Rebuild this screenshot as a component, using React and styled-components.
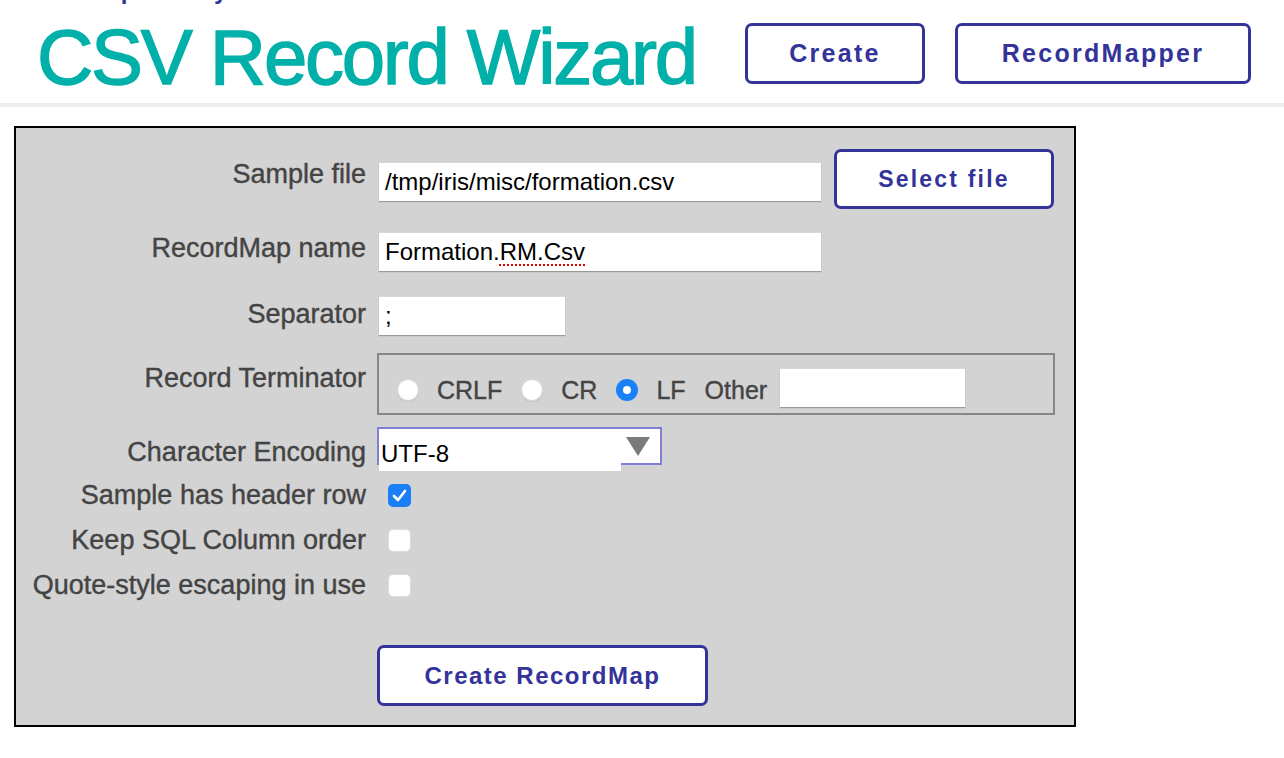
import React from "react";
import styled, { createGlobalStyle } from "styled-components";

const GlobalStyle = createGlobalStyle`
  body {
    margin: 0;
    background: #fff;
    font-family: "Liberation Sans", Arial, sans-serif;
  }
`;

const App = () => {
  return (
    <>
      <GlobalStyle />
      <TopClip>
        <TopText>Interoperability</TopText>
      </TopClip>
      <HeaderBar>
        <Title>CSV Record Wizard</Title>
        <Nav>
          <OutlineButton $w={180} $h={61} $size={25} $ls={2.3}>
            Create
          </OutlineButton>
          <OutlineButton $w={296} $h={61} $size={25} $ls={2.3}>
            RecordMapper
          </OutlineButton>
        </Nav>
      </HeaderBar>
      <Main>
        <Panel>
          <Row $mt={21}>
            <Label $mt={10}>Sample file</Label>
            <FieldGroup>
              <TextField $w={442} $mt={13}>
                /tmp/iris/misc/formation.csv
              </TextField>
              <OutlineButton $w={220} $h={60} $size={23} $ls={2.2}>
                Select file
              </OutlineButton>
            </FieldGroup>
          </Row>

          <Row $mt={23}>
            <Label $mt={1}>RecordMap name</Label>
            <TextField $w={442}>
              Formation.<Misspelled>RM.Csv</Misspelled>
            </TextField>
          </Row>

          <Row $mt={25}>
            <Label $mt={3}>Separator</Label>
            <TextField $w={186}>;</TextField>
          </Row>

          <Row $mt={18}>
            <Label $mt={10}>Record Terminator</Label>
            <Fieldset>
              <Radio />
              <OptionText>CRLF</OptionText>
              <Radio />
              <OptionText>CR</OptionText>
              <Radio $checked />
              <OptionText>LF</OptionText>
              <OptionText $gap={13}>Other</OptionText>
              <TextField $w={185} $mt={-5} $ml={0} />
            </Fieldset>
          </Row>

          <Row $mt={12}>
            <Label $mt={10}>Character Encoding</Label>
            <Select>
              <SelectValue>UTF-8</SelectValue>
              <SelectArrow />
            </Select>
          </Row>

          <Row $mt={12} $center>
            <Label>Sample has header row</Label>
            <Checkbox $checked>
              <svg width="15" height="13" viewBox="0 0 15 13">
                <polyline
                  points="2,7 6,11 13,2"
                  fill="none"
                  stroke="#fff"
                  strokeWidth="2.6"
                  strokeLinecap="round"
                  strokeLinejoin="round"
                />
              </svg>
            </Checkbox>
          </Row>

          <Row $mt={14} $center>
            <Label>Keep SQL Column order</Label>
            <Checkbox />
          </Row>

          <Row $mt={14} $center>
            <Label>Quote-style escaping in use</Label>
            <Checkbox />
          </Row>

          <Row $mt={44}>
            <Label />
            <OutlineButton $w={331} $h={61} $size={24} $ls={1.5}>
              Create RecordMap
            </OutlineButton>
          </Row>
        </Panel>
      </Main>
    </>
  );
};

export default App;

const TopClip = styled.div`
  height: 4px;
  overflow: hidden;
  display: flex;
  align-items: flex-end;
  padding-left: 54px;
`;
const TopText = styled.div`
  flex: 0 0 auto;
  font-size: 24px;
  line-height: 27px;
  font-weight: bold;
  color: #333399;
`;
const HeaderBar = styled.header`
  height: 99px;
  display: flex;
  justify-content: space-between;
  align-items: flex-start;
  padding: 0 33px 0 37px;
  border-bottom: 4px solid #eeeeee;
`;
const Title = styled.h1`
  margin: 14px 0 0;
  font-size: 78px;
  line-height: 78px;
  font-weight: normal;
  letter-spacing: -2.3px;
  color: #00b0a9;
  -webkit-text-stroke: 1.4px #00b0a9;
`;
const Nav = styled.nav`
  display: flex;
  gap: 30px;
  margin-top: 19px;
`;
const OutlineButton = styled.button`
  box-sizing: border-box;
  width: ${(p) => p.$w}px;
  height: ${(p) => p.$h}px;
  flex: 0 0 auto;
  border: 3px solid #333399;
  border-radius: 7px;
  background: #fff;
  color: #333399;
  font-family: "Liberation Sans", Arial, sans-serif;
  font-weight: bold;
  font-size: ${(p) => p.$size}px;
  letter-spacing: ${(p) => p.$ls}px;
  padding: 0;
  cursor: pointer;
`;
const Main = styled.main`
  padding: 19px 0 0 14px;
`;
const Panel = styled.section`
  box-sizing: border-box;
  width: 1062px;
  border: 2px solid #000;
  background: #d3d3d3;
  padding-bottom: 19px;
`;
const Row = styled.div`
  display: flex;
  align-items: ${(p) => (p.$center ? "center" : "flex-start")};
  gap: 11px;
  margin-top: ${(p) => p.$mt}px;
`;
const Label = styled.div`
  flex: 0 0 350px;
  text-align: right;
  font-size: 27px;
  line-height: 31px;
  color: #444;
  -webkit-text-stroke: 0.4px #444;
  margin-top: ${(p) => p.$mt || 0}px;
  white-space: nowrap;
`;
const FieldGroup = styled.div`
  display: flex;
  align-items: flex-start;
  gap: 13px;
`;
const TextField = styled.div`
  box-sizing: border-box;
  width: ${(p) => p.$w}px;
  height: 39px;
  flex: 0 0 auto;
  margin-top: ${(p) => p.$mt || 0}px;
  margin-left: ${(p) => (p.$ml === undefined ? 2 : p.$ml)}px;
  padding: 0 6px;
  background: #fff;
  border-top: 1px solid #d6d6d6;
  box-shadow: 0 1px 1px rgba(0, 0, 0, 0.28);
  font-size: 24px;
  line-height: 38px;
  color: #000;
  white-space: nowrap;
  overflow: hidden;
`;
const Misspelled = styled.span`
  text-decoration: underline dotted #e00000;
  text-decoration-thickness: 2px;
  text-underline-offset: 4px;
`;
const Fieldset = styled.div`
  box-sizing: border-box;
  width: 678px;
  height: 62px;
  border: 2px solid #878787;
  display: flex;
  align-items: center;
  padding: 12px 0 0 18px;
`;
const Radio = styled.span`
  box-sizing: border-box;
  width: 22px;
  height: 22px;
  flex: 0 0 22px;
  border-radius: 50%;
  margin-right: 18px;
  background: ${(p) => (p.$checked ? "#1a80f6" : "#fff")};
  border: ${(p) => (p.$checked ? "none" : "1px solid #d8d8d8")};
  box-shadow: ${(p) =>
    p.$checked ? "inset 0 0 0 7px #1a80f6, inset 0 0 0 11px #fff" : "0 1px 1px rgba(0,0,0,0.08)"};
`;
const OptionText = styled.span`
  font-size: 25px;
  line-height: 31px;
  color: #444;
  -webkit-text-stroke: 0.4px #444;
  margin-right: ${(p) => p.$gap || 19}px;
`;
const Select = styled.div`
  box-sizing: border-box;
  width: 285px;
  height: 38px;
  border: 2px solid #7f7fd6;
  background: #fff;
  display: flex;
  align-items: flex-start;
`;
const SelectValue = styled.div`
  box-sizing: border-box;
  width: 242px;
  height: 42px;
  flex: 0 0 auto;
  padding: 11px 0 0 2px;
  background: #fff;
  font-size: 24px;
  line-height: 28px;
  color: #000;
`;
const SelectArrow = styled.span`
  width: 0;
  height: 0;
  margin: 8px 0 0 5px;
  border-left: 12px solid transparent;
  border-right: 12px solid transparent;
  border-top: 19px solid #7a7a7a;
`;
const Checkbox = styled.span`
  box-sizing: border-box;
  width: 23px;
  height: 23px;
  flex: 0 0 23px;
  margin-left: 11px;
  border-radius: 5px;
  display: flex;
  align-items: center;
  justify-content: center;
  background: ${(p) => (p.$checked ? "#1a7ef6" : "#fff")};
  border: ${(p) => (p.$checked ? "none" : "1px solid #dcdcdc")};
`;
